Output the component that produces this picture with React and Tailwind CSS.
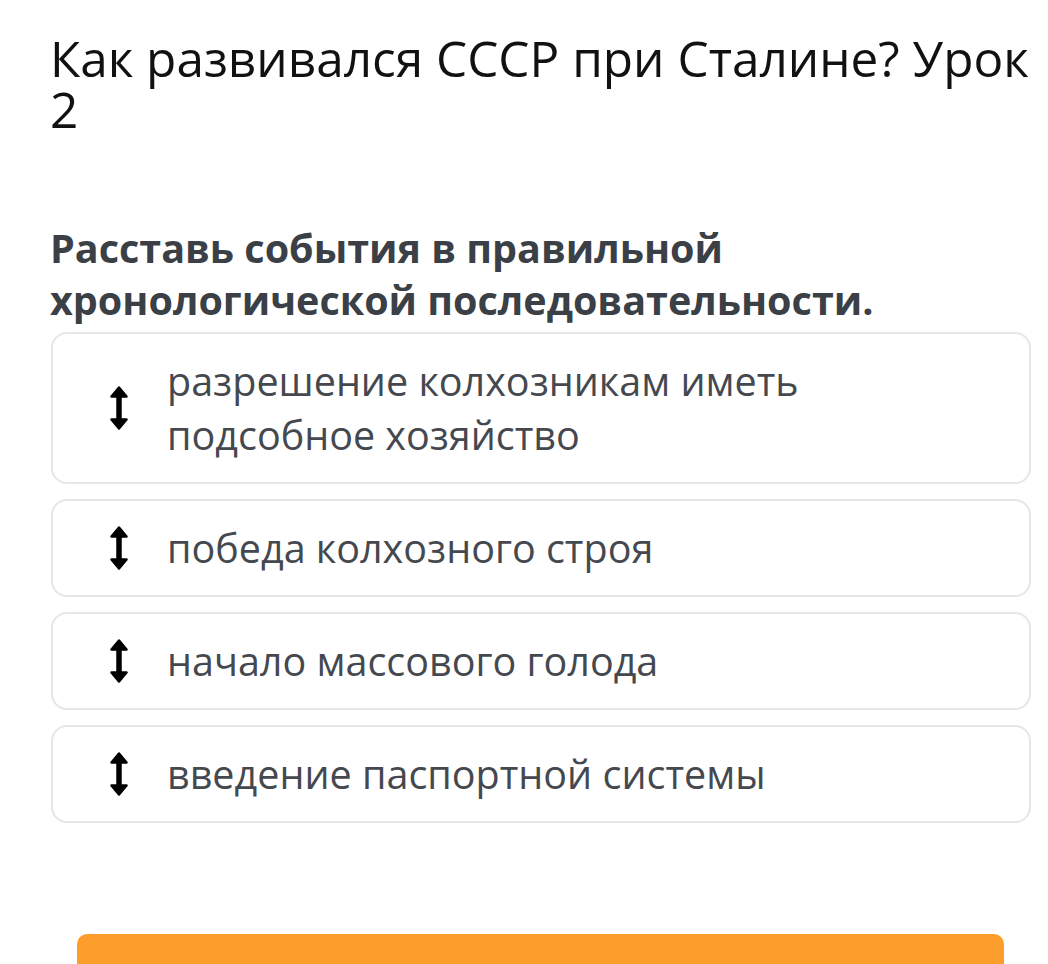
import React from "react";

function DragIcon() {
  return (
    <svg width="24" height="44" viewBox="0 0 24 44" className="shrink-0">
      <rect x="9.25" y="8" width="5.5" height="28" fill="#000" />
      <path d="M12 1.5 L19.5 10.5 L4.5 10.5 Z" fill="#000" stroke="#000" strokeWidth="2.5" strokeLinejoin="round" />
      <path d="M12 42.5 L19.5 33.5 L4.5 33.5 Z" fill="#000" stroke="#000" strokeWidth="2.5" strokeLinejoin="round" />
    </svg>
  );
}

const items = [
  "разрешение колхозникам иметь подсобное хозяйство",
  "победа колхозного строя",
  "начало массового голода",
  "введение паспортной системы",
];

export default function App() {
  return (
    <div
      className="w-[1048px] h-[964px] overflow-hidden bg-white"
      style={{ fontFamily: '"Open Sans", "Noto Sans", sans-serif' }}
    >
      <div className="pl-[50px] pr-[17px] pt-[33px]">
        <h1 className="text-[49.5px] leading-[51px] font-normal text-[#111]">
          Как развивался СССР при Сталине? Урок 2
        </h1>
        <h2 className="mt-[87px] text-[39.5px] leading-[52px] font-bold text-[#3b3f46]">
          Расставь события в правильной хронологической последовательности.
        </h2>
        <div className="mt-[6px] ml-px flex flex-col gap-[15px]">
          {items.map((t, i) => (
            <div
              key={i}
              className="flex items-center rounded-[16px] border-2 border-[#e6e6e6] py-[20px] pl-[54px] pr-[20px]"
            >
              <DragIcon />
              <div className="ml-[36px] text-[39.5px] leading-[54px] text-[#45494f] pr-[200px]">
                {t}
              </div>
            </div>
          ))}
        </div>
        <div className="mt-[111px] ml-[27px] mr-[27px] h-[60px] rounded-[10px] bg-[#fd9d2c]" />
      </div>
    </div>
  );
}
